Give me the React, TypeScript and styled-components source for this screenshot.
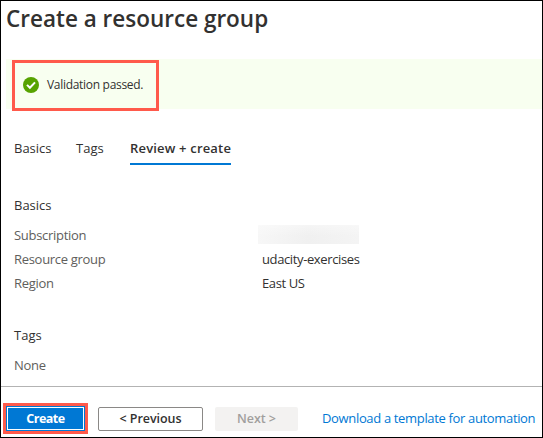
import React from "react";
import styled, { createGlobalStyle, css } from "styled-components";

const Global = createGlobalStyle`
  * { box-sizing: border-box; }
  body { margin: 0; background: #fff; }
`;

const Page = styled.main`
  display: flex;
  flex-direction: column;
  width: 543px;
  height: 438px;
  border: 1px solid #000;
  background: #fff;
  color: #323130;
  font: 13px/24px "Open Sans", "Noto Sans", sans-serif;
  white-space: nowrap;
  overflow: hidden;
`;

const Title = styled.h1`
  margin: 0;
  height: 58px;
  padding: 2px 0 0 5px;
  font-size: 22.5px;
  line-height: 32px;
  font-weight: 600;
  letter-spacing: 0;
`;

const Banner = styled.div`
  height: 50px;
  margin-left: 5px;
  padding: 1px 0 0 6px;
  background: #f8fff0;
`;

const Highlight = styled.div`
  display: flex;
  align-items: center;
  gap: 8px;
  width: 147px;
  height: 51px;
  padding: 0 0 1px 8px;
  border: 3px solid #ff5a4b;
  font-size: 12px;
  letter-spacing: -0.3px;
`;

const Tabs = styled.nav`
  display: flex;
  gap: 25px;
  margin: 27px 0 0 13px;
  height: 29px;
`;

const Tab = styled.a<{ $active?: boolean; $width: number }>`
  width: ${(p) => p.$width}px;
  letter-spacing: 0;
  ${(p) =>
    p.$active &&
    css`
      font-weight: 600;
      letter-spacing: 0.18px;
      border-bottom: 2px solid #0078d4;
    `}
`;

const Section = styled.section<{ $top: number }>`
  margin: ${(p) => p.$top}px 0 0 13px;
`;

const Heading = styled.h2`
  margin: 0 0 6px;
  font-size: 13px;
  line-height: 24px;
  font-weight: 400;
  letter-spacing: 0;
`;

const Row = styled.div`
  display: grid;
  grid-template-columns: 248px 1fr;
  height: 24px;
`;

const Label = styled.span`
  color: #605e5c;
  letter-spacing: -0.3px;
`;

const Value = styled.span`
  letter-spacing: -0.38px;
`;

const Redacted = styled.span`
  width: 101px;
  height: 19px;
  margin: 2px 0 0 -4px;
  background: linear-gradient(180deg, rgba(255, 255, 255, 0.35), transparent 60%),
    linear-gradient(90deg, #f7f7f7, #f0f0f0 50%, #f4f4f4);
`;

const Footer = styled.footer`
  display: flex;
  align-items: center;
  height: 51px;
  margin-top: auto;
  padding: 13px 0 0 2px;
  border-top: 1px solid #b3b3b3;
`;

const CreateFrame = styled.div`
  width: 85px;
  height: 31px;
  border: 3px solid #ff5a4b;
`;

const Button = styled.button<{ $kind: "primary" | "plain" | "disabled" }>`
  display: flex;
  align-items: center;
  justify-content: center;
  height: 24px;
  padding: 0;
  border-radius: 2px;
  font: 600 12.5px/20px "Open Sans", "Noto Sans", sans-serif;
  letter-spacing: -0.05px;
  ${(p) =>
    p.$kind === "primary" &&
    css`
      width: 100%;
      height: 100%;
      padding-top: 1px;
      color: #fff;
      background: #0078d4;
      border: 1px solid #0078d4;
      border-radius: 0;
      box-shadow: inset 0 0 0 1px #fff;
      font-weight: 700;
      letter-spacing: -0.5px;
    `}
  ${(p) =>
    p.$kind === "plain" &&
    css`
      width: 105px;
      margin-left: 10px;
      color: #323130;
      background: #fff;
      border: 1px solid #8a8886;
    `}
  ${(p) =>
    p.$kind === "disabled" &&
    css`
      width: 83px;
      margin-left: 12px;
      color: #a19f9d;
      background: #f3f2f1;
      border: 0;
    `}
`;

const Link = styled.a`
  margin-left: 24px;
  padding-bottom: 2px;
  color: #0078d4;
  letter-spacing: -0.34px;
`;

const CheckIcon = () => (
  <svg width="16" height="16" viewBox="0 0 16 16">
    <circle cx="8" cy="8" r="8" fill="#57a300" />
    <path d="M4 7.9 6.9 10.8 12 5.4" fill="none" stroke="#fff" strokeWidth="2" />
  </svg>
);

export default function App() {
  return (
    <>
      <Global />
      <Page>
        <Title>Create a resource group</Title>
        <Banner>
          <Highlight>
            <CheckIcon />
            Validation passed.
          </Highlight>
        </Banner>
        <Tabs>
          <Tab $width={37}>Basics</Tab>
          <Tab $width={29}>Tags</Tab>
          <Tab $width={101} $active>
            Review + create
          </Tab>
        </Tabs>
        <Section $top={28}>
          <Heading>Basics</Heading>
          <Row>
            <Label>Subscription</Label>
            <Redacted />
          </Row>
          <Row>
            <Label>Resource group</Label>
            <Value>udacity-exercises</Value>
          </Row>
          <Row>
            <Label>Region</Label>
            <Value>East US</Value>
          </Row>
        </Section>
        <Section $top={28}>
          <Heading>Tags</Heading>
          <Row>
            <Label>None</Label>
          </Row>
        </Section>
        <Footer>
          <CreateFrame>
            <Button $kind="primary">Create</Button>
          </CreateFrame>
          <Button $kind="plain">&lt; Previous</Button>
          <Button $kind="disabled" disabled>
            Next &gt;
          </Button>
          <Link>Download a template for automation</Link>
        </Footer>
      </Page>
    </>
  );
}
